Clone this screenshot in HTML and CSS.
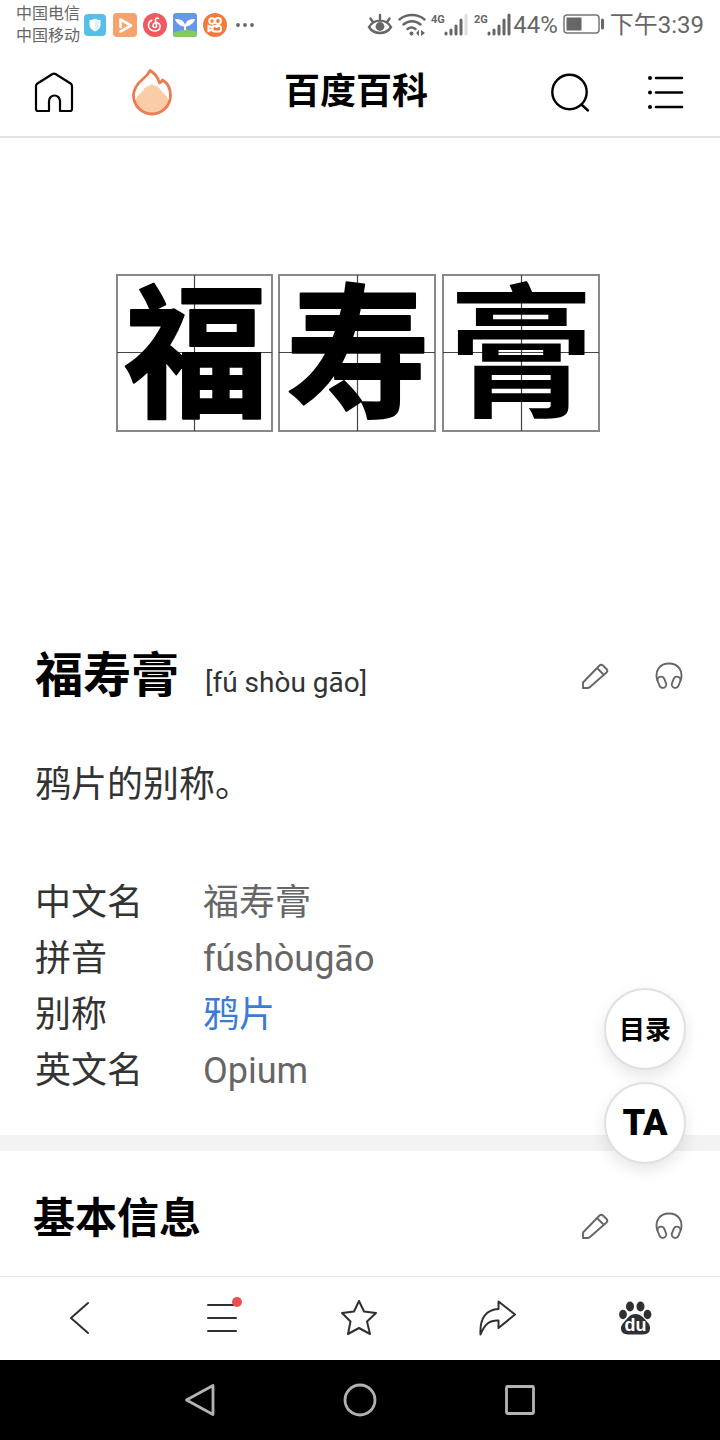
FILE: index.html
```html
<!DOCTYPE html>
<html lang="zh-CN">
<head>
<meta charset="utf-8">
<meta name="viewport" content="width=device-width, initial-scale=1">
<title>福寿膏 - 百度百科</title>
<link rel="stylesheet" href="styles.css">
</head>
<body>
<div class="app">
  <div class="status">
    <div class="carriers"><span>中国电信</span><span>中国移动</span></div>
    <div class="notices">
      <svg width="24" height="24" viewBox="0 0 24 24"><rect x="1" y="1" width="22" height="22" rx="4" fill="#55bfe8"/><path d="M12 5.500c2 1.200 3.500 1.500 5.500 1.500v5c0 3-2.500 5-5.500 6.500-3-1.500-5.500-3.500-5.500-6.500V7c2 0 3.500-.3 5.500-1.500z" fill="#fff"/><path d="M12 7v10c2.500-1.500 4-3 4-5.500V8.400c-1.500-.1-2.800-.5-4-1.400z" fill="#d9f1fa"/></svg>
      <svg width="24" height="24" viewBox="0 0 24 24"><rect width="24" height="24" rx="4" fill="#f6a26d"/><path d="M7.500 14V6.500l10.500 6-10.500 6" fill="none" stroke="#fff" stroke-width="2.600" stroke-linejoin="round" stroke-linecap="round"/></svg>
      <svg width="24" height="24" viewBox="0 0 24 24"><circle cx="12" cy="12" r="12" fill="#ee5a60"/><path d="M15.500 5.500c-2-1-3.500.2-3 2.200l1.100 4.800c.3 2.700-3.800 2.700-3.600 0 .2-2.600 4-4 6.300-1.500 2.300 3 .2 7-4.300 7s-7-3-6.500-6.500c.3-2 1.500-3.500 3.300-4.300" fill="none" stroke="#fff" stroke-width="1.600" stroke-linecap="round"/></svg>
      <svg width="24" height="24" viewBox="0 0 24 24"><rect width="24" height="24" rx="3" fill="#6698e8"/><path d="M0 20c6-3.500 17-4 24-1v2a3 3 0 0 1-3 3H3a3 3 0 0 1-3-3z" fill="#83c966"/><path d="M2 6c6 0 9 2 10 6 1-4 4-6 10-6-1 4-5 7-9 7.500V17h-2v-3.500C7 13 3 10 2 6z" fill="#fff"/></svg>
      <svg width="24" height="24" viewBox="0 0 24 24"><circle cx="12" cy="12" r="12" fill="#f17b3c"/><g fill="none" stroke="#fff" stroke-width="2"><circle cx="9" cy="8" r="2.700"/><circle cx="15" cy="8" r="2.900"/><rect x="9.500" y="13" width="8.500" height="5.500" rx="2"/><path d="M9.500 14.500L5.500 13v5l4-1.500M13.500 13v2"/></g></svg>
      <svg width="24" height="24" viewBox="0 0 24 24" fill="#666"><circle cx="5" cy="12" r="1.900"/><circle cx="12" cy="12" r="1.900"/><circle cx="19" cy="12" r="1.900"/></svg>
    </div>
    <div class="system">
      <svg width="26" height="24" viewBox="0 0 26 24" fill="none" stroke="#666" stroke-width="2.400" stroke-linecap="round"><path d="M2 14c5-8.500 17-8.500 22 0-5 8-17 8-22 0zM13 6V2M5.500 8.500L3.500 5.500M20.500 8.500l2-3"/><circle cx="13" cy="13.500" r="4.400" fill="#666" stroke="none"/></svg>
      <svg width="28" height="24" viewBox="0 0 28 24" fill="none" stroke="#666" stroke-width="2.400" stroke-linecap="round"><path d="M1.500 6.500c7-6 18-6 25 0M5.500 11.500c5-4.300 12-4.300 17 0M9.500 16c2.500-2 5.500-2 8 0"/><circle cx="13.500" cy="20.500" r="2" fill="#666" stroke="none"/><path d="M21 17v6l-3-3zM23 23v-6l4 3z" fill="#666" stroke="none"/></svg>
      <svg class="signal" width="38" height="24" viewBox="0 0 38 24"><text x="0" y="10">4G</text><path d="M15 20v1M20 17v4M25 13v8M30 7v14" stroke="#666" stroke-width="3" stroke-linecap="round"/><path d="M35 1v21" stroke="#ddd" stroke-width="3"/></svg>
      <svg class="signal" width="38" height="24" viewBox="0 0 38 24"><text x="0" y="10">2G</text><path d="M15 20v1M20 17v4M25 13v8M30 7v14M35 2v19" stroke="#666" stroke-width="3" stroke-linecap="round"/></svg>
      <span class="level">44%</span>
      <svg width="42" height="24" viewBox="0 0 42 24"><rect x="1" y="2" width="35" height="18" rx="3" fill="none" stroke="#777" stroke-width="1.500"/><rect x="3.500" y="4.500" width="15" height="13" fill="#666"/><path d="M39.500 7v8" stroke="#666" stroke-width="3" stroke-linecap="round"/></svg>
      <span class="clock">下午3:39</span>
    </div>
  </div>

  <header class="header">
    <div class="side">
      <button class="icon" aria-label="首页"><svg width="44" height="48" viewBox="0 0 44 48" fill="none" stroke="#000" stroke-width="2.200" stroke-linejoin="round"><path d="M17 43H6a2 2 0 0 1-2-2V18a3 3 0 0 1 1.400-2.500L20.500 6a3 3 0 0 1 3 0l15.100 9.500A3 3 0 0 1 40 18v23a2 2 0 0 1-2 2H28V33a5.500 5.500 0 0 0-11 0z"/></svg></button>
      <button class="icon" aria-label="热点"><svg width="44" height="48" viewBox="0 0 44 48"><path d="M5 33c2-6 7-8 9-12 2-3 4-2 8-5 4 3 5 1 8 5 2 4 7 6 9 12-2 7-8 12-17 12S7 40 5 33z" fill="#fbcda7"/><path d="M20 2.500c5 3 8 7 9.500 12.500 1.500-.5 2-1.200 3-3 5 3 8 9 8 15.500a18.500 18.500 0 0 1-37 0c0-8 5-13 10-17 3-2.500 5-4.500 6.500-8z" fill="none" stroke="#ed7a50" stroke-width="2.800" stroke-linejoin="round"/></svg></button>
    </div>
    <div class="brand">百度百科</div>
    <div class="side side-end">
      <button class="icon" aria-label="搜索"><svg width="44" height="48" viewBox="0 0 44 48" fill="none" stroke="#000" stroke-width="2.400" stroke-linecap="round"><circle cx="21.500" cy="24" r="17.200"/><path d="M34 37l6 5.500"/></svg></button>
      <button class="icon" aria-label="目录列表"><svg width="44" height="48" viewBox="0 0 44 48" fill="none" stroke="#000" stroke-width="2.600" stroke-linecap="round"><path d="M16 10h26M16 24.500h26M16 39h26"/><g fill="#000" stroke="none"><circle cx="10" cy="10" r="2"/><circle cx="10" cy="24.500" r="2"/><circle cx="10" cy="39" r="2"/></g></svg></button>
    </div>
  </header>

  <main class="main">
    <svg class="hero" viewBox="0 0 720 480" role="img" aria-label="福寿膏">
      <g fill="none" stroke="#888" stroke-width="2"><rect x="117" y="137" width="155" height="156"/><rect x="279" y="137" width="156" height="156"/><rect x="443" y="137" width="156" height="156"/></g>
      <path d="M117 214.500h155M194.500 137v156M279 214.500h156M357.500 137v156M443 214.500h156M521.500 137v156" stroke="#444" stroke-width="1.200"/>
      <g class="brush"><text x="196" y="268">福</text><text x="358" y="268">寿</text><text class="fine" x="521" y="268">膏</text></g>
    </svg>

    <section class="intro">
      <div class="heading">
        <h1>福寿膏</h1>
        <span class="pinyin">[fú shòu gāo]</span>
        <div class="tools">
          <button class="icon" aria-label="编辑"><svg width="30" height="30" viewBox="0 0 30 30"><use href="#pencil"/></svg></button>
          <button class="icon" aria-label="播放"><svg width="30" height="30" viewBox="0 0 30 30"><use href="#phones"/></svg></button>
        </div>
      </div>
      <p class="summary">鸦片的别称。</p>
      <dl class="facts">
        <dt>中文名</dt><dd>福寿膏</dd>
        <dt>拼音</dt><dd>fúshòugāo</dd>
        <dt>别称</dt><dd><a href="#opium">鸦片</a></dd>
        <dt>英文名</dt><dd>Opium</dd>
      </dl>
    </section>

    <section class="basic">
      <div class="heading">
        <h2>基本信息</h2>
        <div class="tools">
          <button class="icon" aria-label="编辑"><svg width="30" height="30" viewBox="0 0 30 30"><use href="#pencil"/></svg></button>
          <button class="icon" aria-label="播放"><svg width="30" height="30" viewBox="0 0 30 30"><use href="#phones"/></svg></button>
        </div>
      </div>
    </section>

    <div class="floats">
      <button class="float">目录</button>
      <button class="float ta">TA</button>
    </div>
  </main>

  <nav class="toolbar">
    <button class="icon" aria-label="返回"><svg width="44" height="44" viewBox="0 0 44 44"><path d="M30 6L13 21l17 15"/></svg></button>
    <button class="icon" aria-label="菜单"><svg width="48" height="44" viewBox="0 0 48 44"><path d="M13 8h28M13 21h28M13 34h28"/><circle cx="42" cy="5" r="5" fill="#ec4f4d" stroke="none"/></svg></button>
    <button class="icon" aria-label="收藏"><svg width="44" height="44" viewBox="0 0 44 44"><path d="M23 4l5 10.500 12 1.500-9 8.500 3 12.500-11-6-11 6 2.500-12.500L6 16l12-1.500z"/></svg></button>
    <button class="icon" aria-label="分享"><svg width="44" height="44" viewBox="0 0 44 44"><path d="M23.500 4.500L40 17.500 23.500 31v-7.500c-9-.5-14 4-18 14C4.500 20 12 12.500 23.500 12z"/></svg></button>
    <button class="icon" aria-label="百度"><svg width="44" height="44" viewBox="0 0 44 44"><g fill="#2f3033" stroke="none"><ellipse cx="9" cy="17.500" rx="3.900" ry="4.700"/><ellipse cx="16" cy="9.500" rx="4" ry="5"/><ellipse cx="26.500" cy="9.500" rx="4" ry="5"/><ellipse cx="33.500" cy="17.500" rx="3.900" ry="4.700"/><path d="M21.500 17c6 0 8 4 11 7s4.500 6 3 10c-1.500 4-7 3.500-14 3.500S9 38 7.500 34 8 27 11 24s4.500-7 10.500-7z"/></g><text class="du" x="21.500" y="34">du</text></svg></button>
  </nav>

  <nav class="sysnav">
    <button class="icon" aria-label="后退"><svg width="36" height="36" viewBox="0 0 36 36"><path d="M4.500 18L31 3.500v29z"/></svg></button>
    <button class="icon" aria-label="主屏幕"><svg width="36" height="36" viewBox="0 0 36 36"><circle cx="18" cy="18" r="15"/></svg></button>
    <button class="icon" aria-label="最近任务"><svg width="36" height="36" viewBox="0 0 36 36"><rect x="4.500" y="4.500" width="27" height="27" rx="1"/></svg></button>
  </nav>
</div>

<svg class="defs" aria-hidden="true">
  <symbol id="pencil" viewBox="0 0 30 30"><path d="M3 27v-5.500L19.500 4.500a2.500 2.500 0 0 1 3.500 0l3.500 3.500a2.500 2.500 0 0 1 0 3.500L10 26a4 4 0 0 1-2.500 1zM17 7l6.500 6.500" fill="none" stroke="#666" stroke-width="1.900" stroke-linejoin="round"/></symbol>
  <symbol id="phones" viewBox="0 0 30 30"><g fill="none" stroke="#666" stroke-width="1.900"><path d="M3.500 20C0 9 6.500 2.500 15 2.500S30 9 26.500 20"/><rect x="4.500" y="15.500" width="7" height="11.500" rx="3.500" transform="rotate(-22 8 21.500)"/><rect x="18.500" y="15.500" width="7" height="11.500" rx="3.500" transform="rotate(22 22 21.500)"/></g></symbol>
</svg>
</body>
</html>
```
FILE: styles.css
```css
* { box-sizing: border-box; }

body {
  margin: 0;
  background: #fff;
  color: #333;
  font-family: Roboto, "Noto Sans CJK SC", sans-serif;
}

h1, h2, p, dl, dd { margin: 0; }

svg { display: block; }

.defs { position: absolute; width: 0; height: 0; }

.icon {
  display: block;
  padding: 0;
  border: 0;
  background: none;
}

.app {
  display: flex;
  flex-direction: column;
  min-height: 100vh;
}

.status {
  display: flex;
  align-items: center;
  height: 50px;
  padding: 0 16px;
  color: #666;
}

.carriers {
  display: flex;
  flex-direction: column;
  margin-right: 3px;
  font-size: 16px;
  line-height: 22px;
}

.notices { display: flex; gap: 6px; }

.system {
  display: flex;
  align-items: center;
  gap: 5px;
  margin-left: auto;
  font-size: 24px;
  line-height: 32px;
}

.signal text {
  fill: #666;
  font-size: 11px;
  font-weight: 700;
}

.level { margin-left: -4px; }

.header {
  display: grid;
  grid-template-columns: 1fr auto 1fr;
  align-items: center;
  height: 88px;
  padding: 0 36px 2px 32px;
  border-bottom: 2px solid #e3e3e3;
}

.side { display: flex; gap: 54px; }

.side-end { justify-content: flex-end; gap: 48px; }

.brand {
  padding-right: 4px;
  color: #000;
  font-size: 36px;
  font-weight: 700;
  line-height: 48px;
}

.main {
  position: relative;
  flex: 1;
}

.hero { width: 100%; }

.brush {
  fill: #000;
  stroke: #000;
  stroke-width: 2px;
  stroke-linejoin: round;
  font-family: "Noto Sans CJK SC", sans-serif;
  font-size: 144px;
  font-weight: 700;
  text-anchor: middle;
}

.fine { stroke: none; }

.intro {
  padding: 22px 36px 36px 35px;
  border-bottom: 16px solid #f3f3f3;
}

.heading { display: flex; align-items: center; }

h1 {
  color: #000;
  font-size: 48px;
  line-height: 72px;
}

.pinyin {
  margin: 14px 0 0 26px;
  font-size: 28px;
  line-height: 36px;
}

.tools {
  display: flex;
  gap: 44px;
  margin-left: auto;
}

.summary {
  margin: 45px 0 62px;
  font-size: 36px;
  line-height: 56px;
}

.facts {
  display: grid;
  grid-template-columns: 168px 1fr;
  font-size: 36px;
  line-height: 56px;
}

.facts dd { color: #666; }

.facts a { color: #3a7bd5; text-decoration: none; }

.basic { padding: 36px 36px 25px 33px; }

h2 {
  color: #000;
  font-size: 42px;
  line-height: 64px;
}

.basic .tools { padding-top: 14px; }

.floats {
  position: absolute;
  right: 34px;
  bottom: 112px;
  display: flex;
  flex-direction: column;
  gap: 12px;
}

.float {
  width: 82px;
  height: 82px;
  padding: 0 0 4px;
  border: 2px solid #e0e0e0;
  border-radius: 50%;
  background: #fff;
  box-shadow: 0 6px 16px rgba(0, 0, 0, 0.1);
  color: #000;
  font-family: inherit;
  font-size: 26px;
  font-weight: 700;
}

.ta {
  padding: 0;
  font-size: 36px;
  font-weight: 900;
}

.toolbar {
  display: grid;
  grid-template-columns: repeat(5, 1fr);
  place-items: center;
  height: 84px;
  padding: 0 15px 0 11px;
  border-top: 1px solid #e6e6e6;
}

.toolbar svg {
  fill: none;
  stroke: #2f3033;
  stroke-width: 2;
  stroke-linecap: round;
  stroke-linejoin: round;
}

.toolbar .du {
  fill: #fff;
  stroke: none;
  font-size: 18px;
  font-weight: 700;
  text-anchor: middle;
}

.sysnav {
  display: flex;
  justify-content: center;
  align-items: center;
  gap: 124px;
  height: 80px;
  background: #000;
}

.sysnav svg {
  fill: none;
  stroke: #b3b3b3;
  stroke-width: 2.8;
  stroke-linejoin: round;
}
```
